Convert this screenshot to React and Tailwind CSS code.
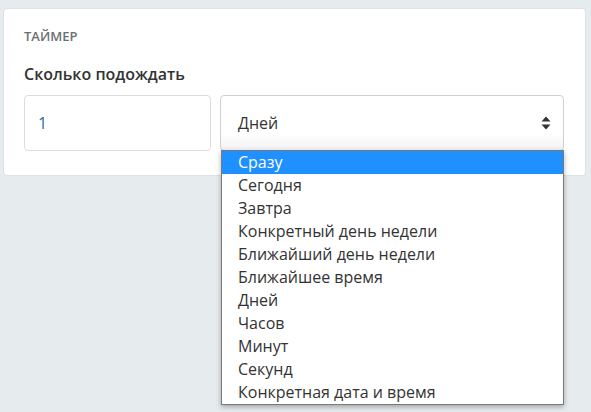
import React from "react";

const items = [
  "Сразу",
  "Сегодня",
  "Завтра",
  "Конкретный день недели",
  "Ближайший день недели",
  "Ближайшее время",
  "Дней",
  "Часов",
  "Минут",
  "Секунд",
  "Конкретная дата и время",
];

export default function App() {
  return (
    <div
      className="w-[591px] h-[412px] bg-[#e6ebed] pt-[8px] pl-[3px] pr-[5px] overflow-hidden"
      style={{ fontFamily: '"Open Sans", sans-serif' }}
    >
      <div className="bg-white border border-[#dde2e4] rounded-[4px] pl-[20px] pr-[21px] pt-[19px] pb-[24px]">
        <div className="text-[13px] font-semibold text-[#6b6f73] leading-[16px]">ТАЙМЕР</div>
        <div className="mt-[20px] text-[16px] font-semibold text-[#333] leading-[20px]">Сколько подождать</div>
        <div className="mt-[11px] flex gap-[9px]">
          <div className="w-[187px] h-[56px] border border-[#dcdcdc] rounded-[4px] flex items-center pl-[13px] text-[16px] text-[#2d6a9f]">
            1
          </div>
          <div className="relative flex-1">
            <div className="h-[56px] border border-[#d0d0d0] rounded-[4px] flex items-center pl-[17px] pr-[12px] text-[16px] text-[#333] bg-gradient-to-b from-white from-70% to-[#f2f2f2]">
              <span className="flex-1">Дней</span>
              <svg width="10" height="14" viewBox="0 0 10 14">
                <path d="M5 0.5 L9.5 5.5 L0.5 5.5 Z" fill="#333" />
                <path d="M5 13.5 L9.5 8.5 L0.5 8.5 Z" fill="#333" />
              </svg>
            </div>
            <div className="absolute left-[1px] right-0 top-[55px] bg-white border border-[#7a7a7a] shadow-[0_2px_5px_rgba(0,0,0,0.3)] z-10">
              {items.map((it, i) => (
                <div
                  key={it}
                  className={
                    i === 0
                      ? "h-[23px] leading-[23px] pl-[16px] text-[16px] bg-[#1e90ff] text-white"
                      : "h-[23px] leading-[23px] pl-[16px] text-[16px] text-[#333]"
                  }
                >
                  {it}
                </div>
              ))}
            </div>
          </div>
        </div>
      </div>
    </div>
  );
}
